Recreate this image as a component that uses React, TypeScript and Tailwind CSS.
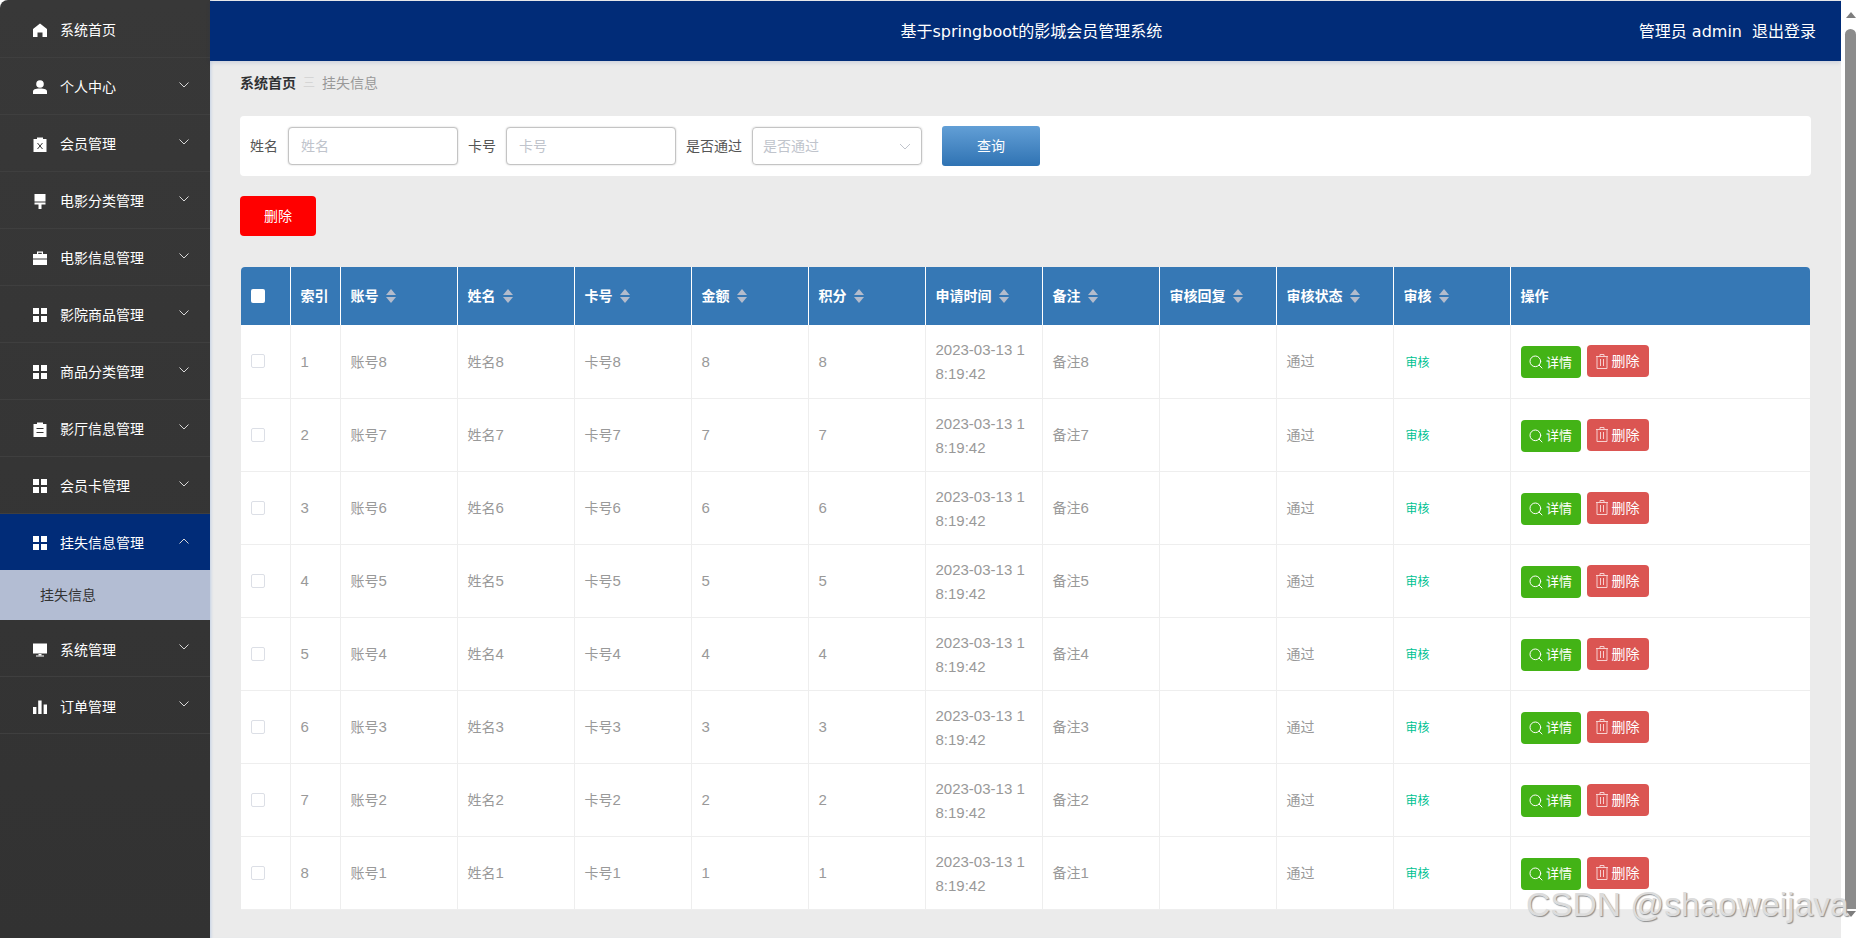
import { Search } from "lucide-react";

const GridIcon = () => (
  <svg viewBox="0 0 14 14" className="h-[14px] w-[14px] fill-white">
    <rect x="0" y="0" width="6" height="6" />
    <rect x="8" y="0" width="6" height="6" />
    <rect x="0" y="8" width="6" height="6" />
    <rect x="8" y="8" width="6" height="6" />
  </svg>
);
const HomeIcon = () => (
  <svg viewBox="0 0 14 14" className="h-[14px] w-[14px] fill-white">
    <path d="M7 0.5 L14 6 V14 H9.5 V9.5 H4.5 V14 H0 V6 Z" />
  </svg>
);
const UserIcon = () => (
  <svg viewBox="0 0 14 14" className="h-[14px] w-[14px] fill-white">
    <circle cx="7" cy="4" r="3.8" />
    <path d="M0 14 V11.5 C0 9.5 2 8.5 7 8.5 C12 8.5 14 9.5 14 11.5 V14 Z" />
  </svg>
);
const ClipXIcon = () => (
  <svg viewBox="0 0 14 15" className="h-[15px] w-[14px]">
    <path className="fill-white" d="M0.5 2 H4 V0.5 H10 V2 H13.5 V15 H0.5 Z" />
    <path d="M4.5 6 L9.5 12 M9.5 6 L4.5 12" className="fill-none stroke-[#363636]" strokeWidth="1" />
  </svg>
);
const BrushIcon = () => (
  <svg viewBox="0 0 14 15" className="h-[15px] w-[14px] fill-white">
    <path d="M1.5 0 H12.5 V7.5 H1.5 Z" />
    <path d="M1.5 8.5 H12.5 V10.5 H8.5 V15 H5.5 V10.5 H1.5 Z" />
  </svg>
);
const CaseIcon = () => (
  <svg viewBox="0 0 14 14" className="h-[14px] w-[14px] fill-white">
    <path d="M4 3 V0.5 H10 V3 H8.8 V1.7 H5.2 V3 Z" />
    <rect x="0" y="3" width="14" height="4.5" />
    <rect x="0" y="8.5" width="14" height="5.5" />
  </svg>
);
const OrderIcon = () => (
  <svg viewBox="0 0 14 15" className="h-[15px] w-[14px]">
    <path className="fill-white" d="M0.5 2 H4 V0.5 H10 V2 H13.5 V15 H0.5 Z" />
    <path d="M3.5 6.5 H10.5 M3.5 10.5 H10.5" className="fill-none stroke-[#363636]" strokeWidth="1.2" />
  </svg>
);
const MonitorIcon = () => (
  <svg viewBox="0 0 14 14" className="h-[14px] w-[14px] fill-white">
    <rect x="0" y="0.5" width="14" height="10" />
    <rect x="5.5" y="11" width="3" height="1.5" />
    <rect x="3" y="12.5" width="8" height="1" />
  </svg>
);
const BarsIcon = () => (
  <svg viewBox="0 0 14 14" className="h-[14px] w-[14px] fill-white">
    <rect x="0" y="7" width="3.4" height="7" />
    <rect x="5.2" y="0.5" width="3.4" height="13.5" />
    <rect x="10.6" y="4.5" width="3.4" height="9.5" />
  </svg>
);

const TrashIcon = () => (
  <svg viewBox="0 0 12 15" className="h-[15px] w-[12px] fill-none stroke-[#f7d0cf]" strokeWidth="1">
    <path d="M0 2.5 H12 M4 2.5 V0.5 H8 V2.5" />
    <path d="M1 2.5 V14.5 H11 V2.5" />
    <path d="M4.5 5 V12 M7.5 5 V12" />
  </svg>
);

const Chevron = ({ up }: { up?: boolean }) => (
  <svg viewBox="0 0 10 6" className="h-[6px] w-[10px] fill-none stroke-[#d8d8d8]" strokeWidth="1">
    <path d={up ? "M0.5 5.5 L5 1 L9.5 5.5" : "M0.5 0.5 L5 5 L9.5 0.5"} />
  </svg>
);

const Caret = () => (
  <svg viewBox="0 0 10 14" className="h-[14px] w-[10px] fill-[#b4bccc]">
    <path d="M5 0 L10 6 H0 Z" />
    <path d="M5 14 L0 8 H10 Z" />
  </svg>
);

const menu = [
  { label: "系统首页", icon: HomeIcon, arrow: false },
  { label: "个人中心", icon: UserIcon, arrow: true },
  { label: "会员管理", icon: ClipXIcon, arrow: true },
  { label: "电影分类管理", icon: BrushIcon, arrow: true },
  { label: "电影信息管理", icon: CaseIcon, arrow: true },
  { label: "影院商品管理", icon: GridIcon, arrow: true },
  { label: "商品分类管理", icon: GridIcon, arrow: true },
  { label: "影厅信息管理", icon: OrderIcon, arrow: true },
  { label: "会员卡管理", icon: GridIcon, arrow: true },
];

const heads = ["账号", "姓名", "卡号", "金额", "积分", "申请时间", "备注", "审核回复", "审核状态", "审核"];

const rows = [8, 7, 6, 5, 4, 3, 2, 1];

const MenuRow = ({ label, Icon, arrow, low }: { label: string; Icon: React.ComponentType; arrow: boolean; low?: boolean }) => (
  <div className={`flex h-[57px] items-center border-b border-[#3f3f3f] pl-[33px] pr-[21px] text-sm text-white ${low ? "pt-[4px]" : "pt-[2px]"}`}>
    <span className="flex w-[27px] shrink-0">
      <Icon />
    </span>
    <span className="flex-1">{label}</span>
    {arrow && (
      <span className={`flex ${low ? "-mt-[7px]" : "-mt-[5px]"}`}>
        <Chevron />
      </span>
    )}
  </div>
);

const Sidebar = () => (
  <aside className="h-full w-[210px] shrink-0 overflow-hidden rounded-tl-lg bg-[#363636] bg-gradient-to-b from-[#383838] to-[#323232] pt-px">
    {menu.map((m) => (
      <MenuRow key={m.label} label={m.label} Icon={m.icon} arrow={m.arrow} />
    ))}
    <div className="flex h-[56px] items-center bg-[#012c78] pl-[33px] pr-[21px] pt-[2px] text-sm text-white">
      <span className="flex w-[27px] shrink-0">
        <GridIcon />
      </span>
      <span className="flex-1">挂失信息管理</span>
      <span className="-mt-[5px] flex">
        <Chevron up />
      </span>
    </div>
    <div className="flex h-[50px] items-center bg-[#b3bdd3] pl-[40px] text-sm text-[#333]">挂失信息</div>
    <MenuRow label="系统管理" Icon={MonitorIcon} arrow low />
    <MenuRow label="订单管理" Icon={BarsIcon} arrow low />
  </aside>
);

const Field = ({ label, placeholder, width }: { label: string; placeholder: string; width: string }) => (
  <div className="flex items-center">
    <span className="mr-[10px] text-sm text-[#555]">{label}</span>
    <input
      placeholder={placeholder}
      className={`h-[38px] ${width} rounded border border-[#c4c4c4] bg-white px-[12px] text-sm shadow-[0_0_2px_rgba(0,0,0,0.2)] outline-none placeholder:text-[#c0c4cc]`}
    />
  </div>
);

const FilterBar = () => (
  <div className="flex h-[60px] items-center rounded-sm bg-white pl-[10px]">
    <Field label="姓名" placeholder="姓名" width="w-[170px]" />
    <div className="ml-[10px]">
      <Field label="卡号" placeholder="卡号" width="w-[170px]" />
    </div>
    <div className="ml-[10px] flex items-center">
      <span className="mr-[10px] text-sm text-[#555]">是否通过</span>
      <div className="flex h-[38px] w-[170px] items-center justify-between rounded border border-[#c4c4c4] pl-[10px] pr-[10px] text-sm text-[#c0c4cc] shadow-[0_0_2px_rgba(0,0,0,0.2)]">
        是否通过
        <svg viewBox="0 0 12 7" className="h-[7px] w-[12px] fill-none stroke-[#c0c4cc]" strokeWidth="1">
          <path d="M1 1 L6 6 L11 1" />
        </svg>
      </div>
    </div>
    <button className="ml-[20px] h-10 w-[98px] rounded-[3px] bg-gradient-to-b from-[#629fd6] to-[#2f73b3] text-sm text-white">
      查询
    </button>
  </div>
);

const cell = "border-r border-b border-[#eeeeee] px-[10px] align-middle";
const greyCell = `${cell} text-sm text-[#999]`;
const numCell = `${cell} pt-[2px] text-[15px] text-[#999]`;
const headCell = "border-r border-white px-[10px] text-left text-sm font-bold text-white";

const DataTable = () => (
  <table className="mx-px mt-[31px] w-[1569px] table-fixed border-collapse overflow-hidden rounded-t bg-white">
    <colgroup>
      <col className="w-[49px]" />
      <col className="w-[50px]" />
      {heads.map((h) => (
        <col key={h} className="w-[117px]" />
      ))}
      <col />
    </colgroup>
    <thead>
      <tr className="h-[58px] bg-[#3678b5]">
        <th className={headCell}>
          <span className="block h-[14px] w-[14px] rounded-[2px] bg-white" />
        </th>
        <th className={headCell}>索引</th>
        {heads.map((h) => (
          <th key={h} className={headCell}>
            <span className="flex items-center gap-[7px]">
              {h}
              <Caret />
            </span>
          </th>
        ))}
        <th className="px-[10px] text-left text-sm font-bold text-white">操作</th>
      </tr>
    </thead>
    <tbody>
      {rows.map((n, i) => (
        <tr key={n} className="h-[73px]">
          <td className={cell}>
            <span className="block h-[14px] w-[14px] rounded-[2px] border border-[#dcdfe6] bg-white" />
          </td>
          <td className={numCell}>{i + 1}</td>
          <td className={greyCell}>
            账号<span className="text-[15px]">{n}</span>
          </td>
          <td className={greyCell}>
            姓名<span className="text-[15px]">{n}</span>
          </td>
          <td className={greyCell}>
            卡号<span className="text-[15px]">{n}</span>
          </td>
          <td className={numCell}>{n}</td>
          <td className={numCell}>{n}</td>
          <td className={`${numCell} break-all leading-6`}>2023-03-13 18:19:42</td>
          <td className={greyCell}>
            备注<span className="text-[15px]">{n}</span>
          </td>
          <td className={greyCell}></td>
          <td className={greyCell}>通过</td>
          <td className={`${cell} pl-[12px] pt-[3px] text-xs text-[#00c292]`}>审核</td>
          <td className="border-b border-[#eeeeee] px-[10px] align-middle">
            <div className="mt-px flex items-start gap-[6px]">
              <button className="mt-px flex h-8 w-[60px] items-center justify-center gap-[2px] rounded bg-[#43b316] pr-[1px] text-[13px] text-white">
                <Search size={16} strokeWidth={1.5} />
                详情
              </button>
              <button className="flex h-8 w-[62px] items-center justify-center gap-[4px] rounded bg-[#db5552] text-sm text-white">
                <TrashIcon />
                删除
              </button>
            </div>
          </td>
        </tr>
      ))}
    </tbody>
  </table>
);

const Scrollbar = () => (
  <div className="flex h-full w-[19px] shrink-0 flex-col items-center bg-white pt-[12px]">
    <svg viewBox="0 0 10 6" className="h-[6px] w-[10px] fill-[#7d7d7d]">
      <path d="M5 0 L10 6 H0 Z" />
    </svg>
    <div className="mt-[11px] h-[880px] w-[11px] rounded-t-md bg-[#8c8c8c]" />
    <svg viewBox="0 0 10 6" className="mt-[2px] h-[6px] w-[10px] fill-[#7d7d7d]">
      <path d="M5 6 L0 0 H10 Z" />
    </svg>
  </div>
);

export default function App() {
  return (
    <div className="relative flex h-[938px] w-[1860px] overflow-hidden bg-white font-['Liberation_Sans','Noto_Sans_CJK_SC',sans-serif]">
      <Sidebar />
      <main className="flex h-full flex-1 flex-col bg-[#ebebeb] shadow-[inset_3px_0_3px_-2px_rgba(120,160,220,0.35)]">
        <header className="mt-px flex h-[60px] shrink-0 items-center bg-[#012c78] pr-[25px] pt-[2px] font-['DejaVu_Sans','Noto_Sans_CJK_SC',sans-serif] text-white shadow-[0_2px_4px_rgba(0,40,120,0.12)]">
          <div className="flex-1 pl-[214px] text-center text-base">基于springboot的影城会员管理系统</div>
          <div className="flex gap-[10px] text-base">
            <span>管理员 admin</span>
            <span>退出登录</span>
          </div>
        </header>
        <div className="px-[30px]">
          <div className="flex h-[55px] items-center pb-[12px] text-sm">
            <span className="font-bold text-[#303133]">系统首页</span>
            <span className="mx-[7px] text-xs text-[#d5d5d5]">三</span>
            <span className="text-[#999]">挂失信息</span>
          </div>
          <FilterBar />
          <button className="mt-5 block h-10 w-[76px] rounded bg-[#ff0000] text-sm text-white">删除</button>
          <DataTable />
        </div>
      </main>
      <Scrollbar />
      <div className="absolute left-[1526px] top-[885px] font-['Liberation_Sans',sans-serif] text-[33.5px] leading-10 whitespace-nowrap text-[#dcdcdc] [text-shadow:1px_1px_1px_#8f8f8f]">
        CSDN @shaoweijava
      </div>
    </div>
  );
}
